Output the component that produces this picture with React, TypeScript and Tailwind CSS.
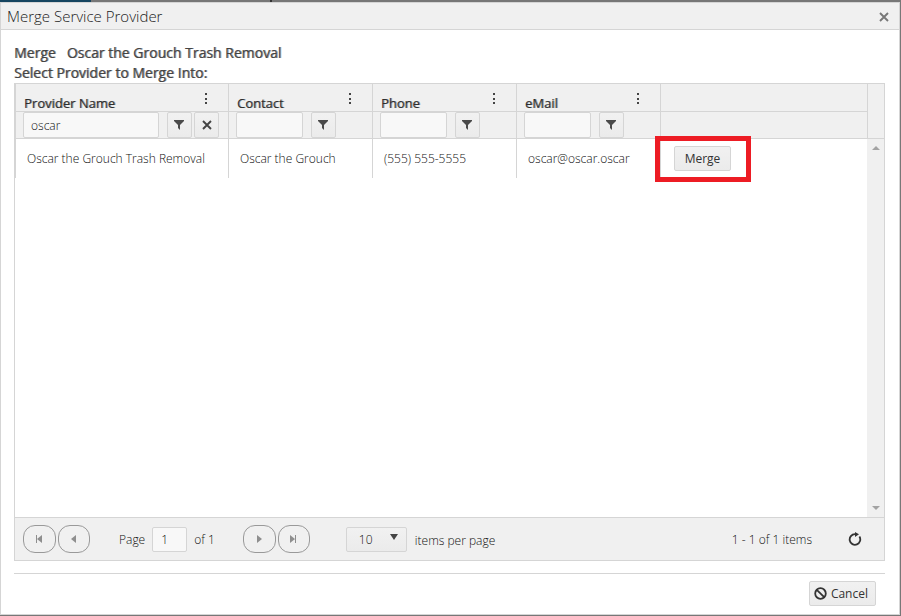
import React from "react";

type Column = { title: string; value: string; filter: string; width: string };

const columns: Column[] = [
  { title: "Provider Name", value: "Oscar the Grouch Trash Removal", filter: "oscar", width: "w-[213px]" },
  { title: "Contact", value: "Oscar the Grouch", filter: "", width: "w-36" },
  { title: "Phone", value: "(555) 555-5555", filter: "", width: "w-36" },
  { title: "eMail", value: "oscar@oscar.oscar", filter: "", width: "w-36" },
];

const line = "border-[#d5d5d5]";
const face = "border border-[#d5d5d5] rounded-xs bg-linear-to-b from-[#f1f1f1] to-[#ebebeb]";
const heading = "text-sm leading-5 font-medium text-[#444] [text-shadow:1px_0_0_#44444499]";

function FunnelIcon() {
  return (
    <svg className="mr-0.5" width="12" height="12" viewBox="0 0 12 12" fill="#4a4a4a" aria-hidden="true">
      <path d="M1 1h10v1L7 6v5L5 9V6L1 2z" />
    </svg>
  );
}

function CrossIcon({ color }: { color: string }) {
  return (
    <svg width="10" height="10" viewBox="0 0 10 10" stroke={color} strokeWidth="1.9" aria-hidden="true">
      <path d="M1 1l8 8M9 1l-8 8" />
    </svg>
  );
}

function DotsIcon() {
  return (
    <svg width="4" height="12" viewBox="0 0 4 12" fill="#444" aria-hidden="true">
      <path d="M1 0h2v2H1zM1 5h2v2H1zM1 9h2v2H1z" />
    </svg>
  );
}

function PagerButton({ label, path, width }: { label: string; path: string; width: string }) {
  return (
    <button aria-label={label} className={"flex h-7 items-center justify-center rounded-xl border border-[#999] " + width}>
      <svg className="mr-px" width="8" height="8" viewBox="0 0 8 8" fill="#8e8e8e" aria-hidden="true">
        <path d={path} />
      </svg>
    </button>
  );
}

function ColumnWidths() {
  return (
    <colgroup>
      {columns.map((c) => (
        <col key={c.title} className={c.width} />
      ))}
      <col />
    </colgroup>
  );
}

export default function App() {
  return (
    <div className="flex min-h-screen flex-col border-b border-[#777] bg-white font-['Open_Sans','Noto_Sans',sans-serif] text-xs font-light text-[#111]">
      <div className="flex h-0.5 bg-[#777]">
        <div className="w-[91px] bg-[#164560]" />
        <div className="ml-[179px] w-0.5 bg-[#333]" />
      </div>
      <div className="flex flex-1 flex-col border-r border-[#777]">
        <div className="flex flex-1 flex-col border border-[#d5d5d5]">
          <header className="flex h-[27px] items-center justify-between border-b border-[#d5d5d5] bg-[#f0f0f0] pr-[10px] pl-[6px]">
            <h1 className="pb-px text-[15px] leading-5 text-[#222]">Merge Service Provider</h1>
            <button aria-label="Close" className="pt-0.5">
              <CrossIcon color="#777" />
            </button>
          </header>

          <main className="flex flex-1 flex-col px-[13px] pt-[13px] pr-[14px]">
            <h2 className={heading}>
              Merge<span className="ml-[11px]">Oscar the Grouch Trash Removal</span>
            </h2>
            <h2 className={heading}>Select Provider to Merge Into:</h2>

            <section className={"flex flex-1 flex-col border " + line}>
              <table className="w-full table-fixed border-separate border-spacing-0 bg-[#f0f0f0]">
                <colgroup>
                  {columns.map((c) => (
                    <col key={c.title} className={c.width} />
                  ))}
                  <col />
                  <col className="w-[17px]" />
                </colgroup>
                <thead>
                  <tr>
                    {columns.map((c) => (
                      <th key={c.title} className={"h-7 border-b border-l p-0 " + line}>
                        <div className="flex h-[27px] items-start justify-between pr-5 pl-2">
                          <span className="pt-[11px] text-[13px] leading-4 font-medium text-[#2e2e2e] [text-shadow:1px_0_0_#2e2e2e80]">{c.title}</span>
                          <button aria-label={c.title + " column settings"} className="pt-[9px]">
                            <DotsIcon />
                          </button>
                        </div>
                      </th>
                    ))}
                    <td className={"border-b border-l " + line} />
                    <td rowSpan={2} className={"border-b border-l " + line} />
                  </tr>
                  <tr>
                    {columns.map((c) => (
                      <td key={c.title} className={"h-[27px] border-b border-l p-0 " + line}>
                        <div className={"flex h-[26px] items-start pl-[7px] " + (c.filter ? "pr-[9px]" : "pr-9")}>
                          <input
                            aria-label={"Filter " + c.title}
                            defaultValue={c.filter}
                            className={"h-[26px] min-w-0 flex-1 rounded-xs border bg-[#f8f8f8] px-[7px] " + line}
                          />
                          <button aria-label={"Filter type for " + c.title} className={"ml-2 flex h-[26px] w-[25px] items-center justify-center " + face}>
                            <FunnelIcon />
                          </button>
                          {c.filter && (
                            <button aria-label="Clear filter" className={"ml-0.5 flex h-[26px] w-[25px] items-center justify-center " + face}>
                              <CrossIcon color="#444" />
                            </button>
                          )}
                        </div>
                      </td>
                    ))}
                    <td className={"border-b border-l " + line} />
                  </tr>
                </thead>
              </table>

              <div className="flex flex-1">
                <div className="min-w-0 flex-1">
                  <table className="w-full table-fixed border-separate border-spacing-0">
                    <ColumnWidths />
                    <tbody>
                      <tr>
                        {columns.map((c) => (
                          <td key={c.title} className={"h-[39px] border-l py-0 pr-0 pl-[11px] whitespace-nowrap " + line}>
                            {c.value}
                          </td>
                        ))}
                        <td className={"relative h-[39px] border-l py-0 pr-0 pl-[13px] " + line}>
                          <button className={"flex h-[25px] w-[57px] items-center justify-center pt-px font-normal text-[#333] " + face}>Merge</button>
                          <span className="pointer-events-none absolute -top-[3px] -left-[6px] h-[46px] w-24 border-5 border-[#ed1c24]" />
                        </td>
                      </tr>
                    </tbody>
                  </table>
                </div>
                <div className="flex w-[17px] flex-col items-center justify-between bg-[#f0f0f0] pt-[7px] pb-1.5">
                  <svg width="8" height="5" viewBox="0 0 8 5" fill="#a3a3a3" aria-hidden="true">
                    <path d="M0 4h8L4 0z" />
                  </svg>
                  <svg width="8" height="5" viewBox="0 0 8 5" fill="#a3a3a3" aria-hidden="true">
                    <path d="M0 0h8L4 4z" />
                  </svg>
                </div>
              </div>

              <footer className={"flex h-[43px] items-center border-t bg-[#f0f0f0] pr-[22px] pl-2 " + line}>
                <div className="flex gap-0.5">
                  <PagerButton label="First page" path="M1 0h1v8H1zM7 0v8L2 4z" width="w-[33px]" />
                  <PagerButton label="Previous page" path="M6 0v8L1 4z" width="w-8" />
                </div>
                <label className="ml-[29px] flex items-center">
                  <span className="pt-0.5">Page</span>
                  <input defaultValue="1" className={"mx-[7px] h-[25px] w-[35px] rounded-xs border bg-[#f8f8f8] px-2 " + line} />
                  <span className="pt-0.5">of 1</span>
                </label>
                <div className="ml-7 flex gap-0.5">
                  <PagerButton label="Next page" path="M2 0v8L7 4z" width="w-[33px]" />
                  <PagerButton label="Last page" path="M1 0v8L6 4zM6 0h1v8H6z" width="w-8" />
                </div>
                <label className="ml-9 flex items-center">
                  <span className="grid items-center">
                    <select className={"col-start-1 row-start-1 h-[25px] w-[61px] appearance-none pt-0.5 pl-3 " + face}>
                      <option>10</option>
                    </select>
                    <svg className="pointer-events-none col-start-1 row-start-1 mr-[9px] mb-1 justify-self-end" width="8" height="6" viewBox="0 0 8 6" fill="#444" aria-hidden="true">
                      <path d="M0 0h8L4 6z" />
                    </svg>
                  </span>
                  <span className="ml-2 pt-1">items per page</span>
                </label>
                <span className="ml-auto pt-0.5">1 - 1 of 1 items</span>
                <button aria-label="Refresh" className="ml-9">
                  <svg width="14" height="14" viewBox="0 0 14 14" fill="none" stroke="#333" strokeWidth="1.8" aria-hidden="true">
                    <path d="M11.4 4.6A5.3 5.3 0 1 1 7 2.2h2" />
                    <path d="M7 0l4 2.2L7 5z" fill="#333" stroke="none" />
                  </svg>
                </button>
              </footer>
            </section>

            <div className={"mt-3 flex h-[41px] justify-end border-t pt-[7px] pr-[9px] " + line}>
              <button className={"flex h-[25px] items-center gap-1 px-1 pr-[7px] font-normal text-[#333] " + face}>
                <svg width="13" height="13" viewBox="0 0 13 13" fill="none" stroke="#333" strokeWidth="1.8" aria-hidden="true">
                  <circle cx="6.5" cy="6.5" r="5.3" />
                  <path d="M2.8 2.8l7.4 7.4" />
                </svg>
                Cancel
              </button>
            </div>
          </main>
        </div>
      </div>
    </div>
  );
}
